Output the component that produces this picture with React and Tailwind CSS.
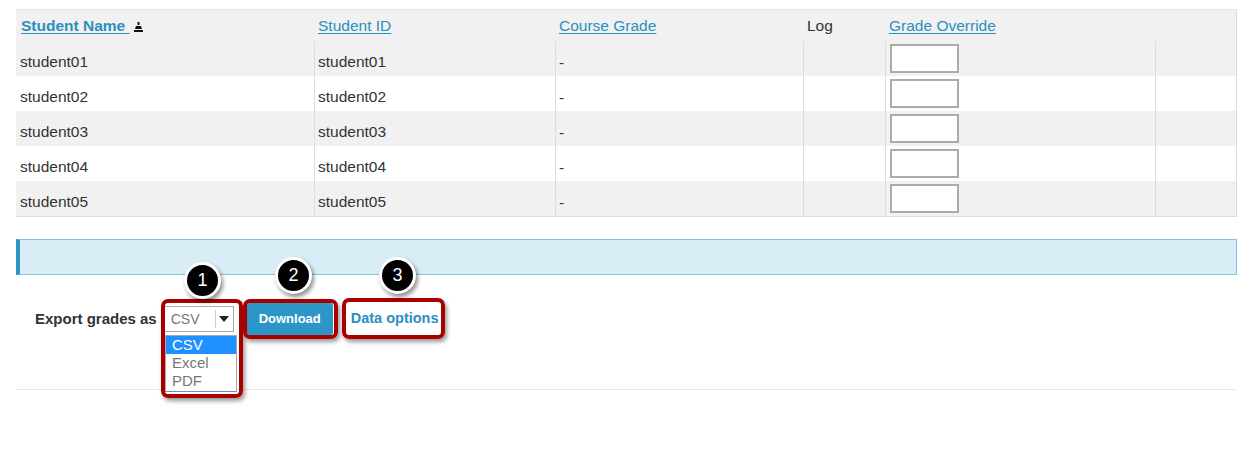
import React from "react";

const students = ["student01", "student02", "student03", "student04", "student05"];

const cols = "grid grid-cols-[298px_241px_248px_82px_270px_82px]";

const SortIcon = () => (
    <svg width="9" height="10" viewBox="0 0 9 10" className="inline-block ml-[4px] align-[-1px]">
        <path d="M3.5 0h2v3h-2z" fill="#111" />
        <path d="M2 4h5l1 3H1z" fill="#111" />
        <path d="M0 8h9v2H0z" fill="#111" />
    </svg>
);

const Badge = ({ n, className }) => (
    <div
        className={`absolute w-[37px] h-[37px] rounded-full bg-black border-[3px] border-white shadow-[2px_3px_4px_rgba(0,0,0,0.45)] flex items-center justify-center text-white text-[18px] ${className}`}
    >
        {n}
    </div>
);

const RedBox = ({ className }) => (
    <div
        className={`absolute border-[4px] border-[#a80000] rounded-[7px] shadow-[2px_3px_4px_rgba(0,0,0,0.4)] ${className}`}
    />
);

export default function App() {
    return (
        <div className="relative w-[1252px] h-[469px] bg-white font-['Liberation_Sans',Arial,sans-serif] text-[#333] overflow-hidden">
            <div className="ml-[16px] w-[1221px] pt-[9px]">
                {/* table */}
                <div className="border-t border-[#e2e2e2] border-b border-b-[#dcdcdc] border-r border-r-[#dcdcdc] bg-[#f1f1f1]">
                    <div className={`${cols} h-[31px] items-center text-[15.5px]`}>
                        <div className="pl-[5px]">
                            <a className="font-bold text-[#2a8fc0] underline underline-offset-2">
                                Student Name <SortIcon />
                            </a>
                        </div>
                        <div className="pl-[4px]">
                            <a className="text-[#2a8fc0] underline underline-offset-2">Student ID</a>
                        </div>
                        <div className="pl-[4px]">
                            <a className="text-[#2a8fc0] underline underline-offset-2">Course Grade</a>
                        </div>
                        <div className="pl-[4px]">Log</div>
                        <div className="pl-[4px]">
                            <a className="text-[#2a8fc0] underline underline-offset-2">Grade Override</a>
                        </div>
                        <div />
                    </div>
                    {students.map((s, i) => (
                        <div
                            key={s}
                            className={`${cols} h-[35px] text-[15.5px] leading-[18px] ${i % 2 === 0 ? "bg-[#f1f1f1]" : "bg-white"}`}
                        >
                            <div className="pl-[4px] pt-[12px]">{s}</div>
                            <div className="pl-[3px] pt-[12px] border-l border-[#dcdcdc]">{s}</div>
                            <div className="pl-[3px] pt-[13px] border-l border-[#dcdcdc]">-</div>
                            <div className="border-l border-[#dcdcdc]" />
                            <div className="pl-[4px] pt-[3px] border-l border-[#dcdcdc]">
                                <div className="w-[69px] h-[29px] bg-white border-2 border-[#ababab]" />
                            </div>
                            <div className="border-l border-[#dcdcdc]" />
                        </div>
                    ))}
                </div>

                {/* info bar */}
                <div className="mt-[22px] h-[36px] bg-[#d9edf7] border border-[#7fc4e4] border-l-[4px] border-l-[#2a93c4]" />

                {/* export row */}
                <div className="mt-[28px] h-[32px] flex items-center pl-[19px]">
                    <span className="font-bold text-[15px] text-[#333]">Export grades as</span>
                    <div className="ml-[7px] w-[70px] h-[26px] border border-[#aaa] bg-white flex items-center text-[14px] text-[#777]">
                        <span className="pl-[6px] w-[50px]">CSV</span>
                        <span className="h-[18px] border-l border-[#ccc]" />
                        <span className="flex-1 flex justify-center">
                            <svg width="10" height="6" viewBox="0 0 10 6">
                                <path d="M0 0h10L5 6z" fill="#222" />
                            </svg>
                        </span>
                    </div>
                    <button className="ml-[13px] w-[86px] h-[32px] rounded-[3px] bg-[#2d96c8] text-white font-bold text-[13px]">
                        Download
                    </button>
                    <a className="ml-[18px] font-bold text-[14.5px] text-[#2a8fc0]">Data options</a>
                </div>

                <div className="mt-[54px] h-px bg-[#e8e8e8]" />
            </div>

            {/* open select list */}
            <div className="absolute left-[165px] top-[335px] w-[72px] bg-white border border-[#aaa] border-b-[#6f8fb8] text-[15px] leading-[18px] text-[#777]">
                <div className="bg-[#1e90ff] text-white pl-[6px]">CSV</div>
                <div className="pl-[6px]">Excel</div>
                <div className="pl-[6px] pb-[1px]">PDF</div>
            </div>

            {/* annotations */}
            <RedBox className="left-[161px] top-[299px] w-[82px] h-[99px]" />
            <RedBox className="left-[243px] top-[299px] w-[95px] h-[40px]" />
            <RedBox className="left-[342px] top-[298px] w-[103px] h-[41px]" />
            <Badge n="1" className="left-[184px] top-[262px]" />
            <Badge n="2" className="left-[275px] top-[257px]" />
            <Badge n="3" className="left-[379px] top-[257px]" />
        </div>
    );
}
